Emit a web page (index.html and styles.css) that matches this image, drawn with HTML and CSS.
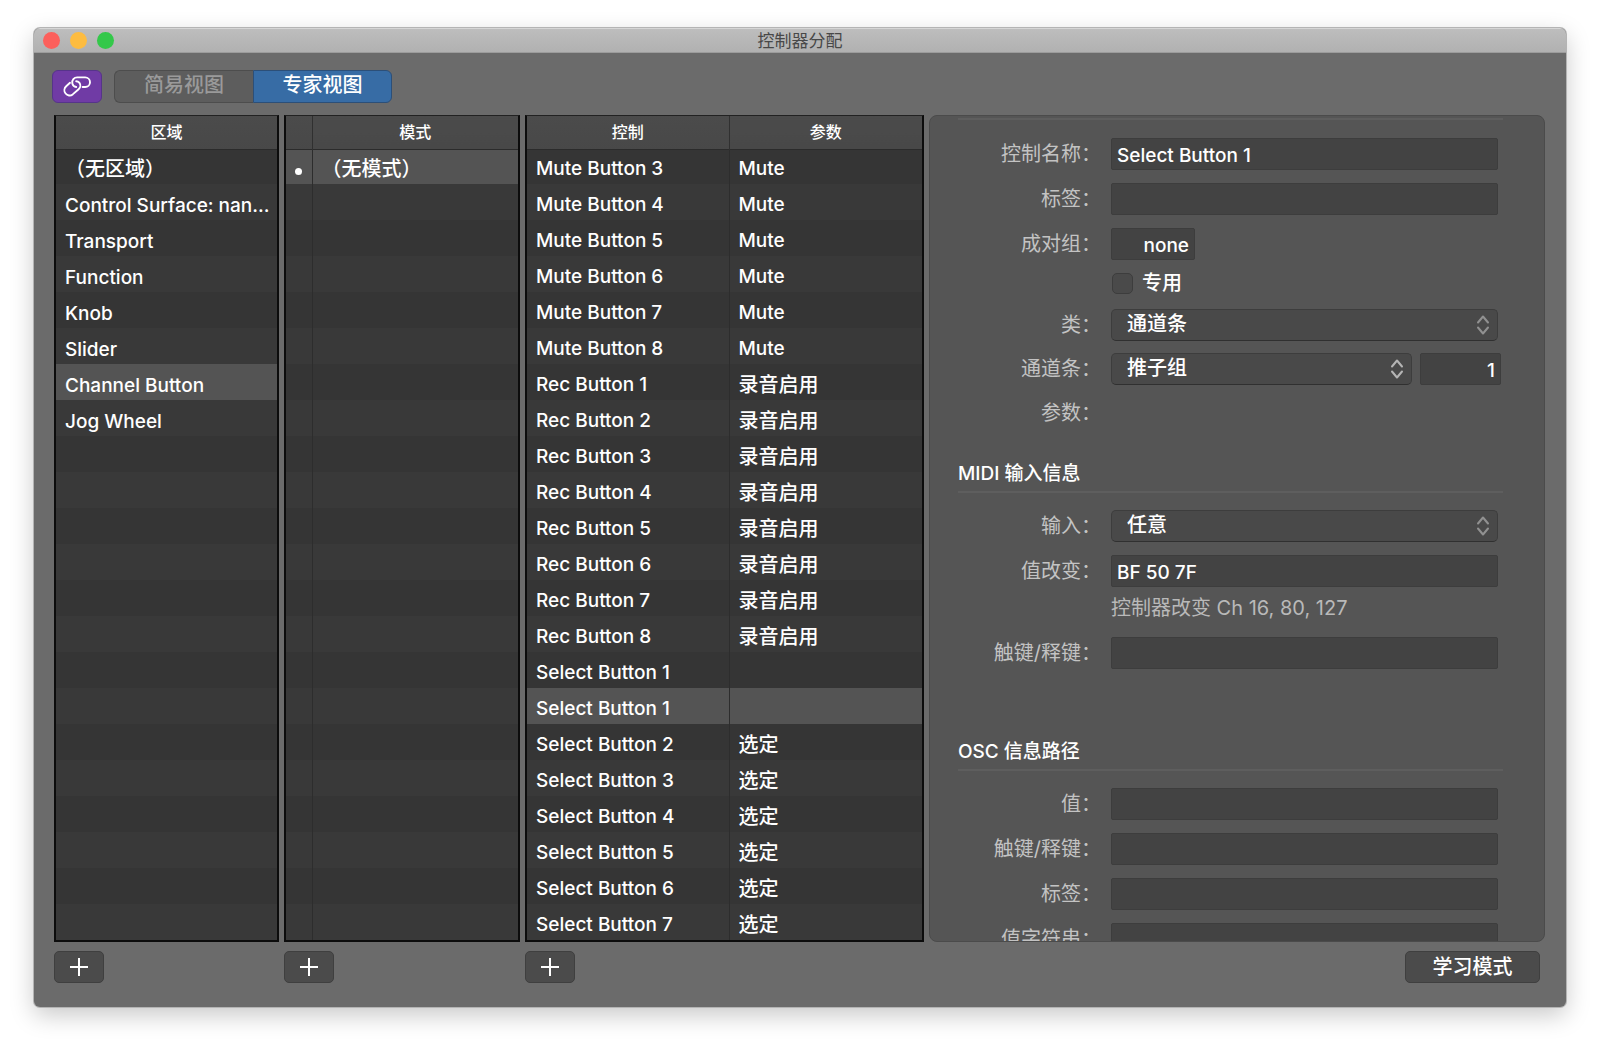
FILE: index.html
```html
<!DOCTYPE html>
<html lang="zh-CN">
<head>
<meta charset="utf-8">
<meta name="viewport" content="width=device-width, initial-scale=1">
<title>控制器分配</title>
<link rel="stylesheet" href="styles.css">
</head>
<body>
<div class="window">
  <header class="titlebar">
    <div class="lights"><span class="light close"></span><span class="light minimize"></span><span class="light zoom"></span></div>
    <h1 class="title">控制器分配</h1>
  </header>

  <div class="toolbar">
    <button class="link-button" type="button" aria-label="链接">
      <svg width="28" height="22" viewBox="0 0 28 22" fill="none" stroke="#fff" stroke-width="1.9" stroke-linecap="round" stroke-linejoin="round">
        <path d="M7 6.800 3.200 10.200A5.300 5.300 0 0 0 2.600 17.500C4.300 19.800 7.500 20.200 9.700 18.400L15.600 13.300A4.800 4.800 0 0 0 16.300 6.700C15.500 5.800 14.500 5.300 13.200 5.300"/>
        <path d="M19.600 11H22.200A4.800 4.800 0 0 0 22.200 1.400H14.300A5 5 0 0 0 9.300 7.400C9.700 9.400 11 10.700 13.200 11"/>
      </svg>
    </button>
    <div class="segmented">
      <button class="segment" type="button">简易视图</button>
      <button class="segment active" type="button">专家视图</button>
    </div>
  </div>

  <main class="panes">
    <div class="list zones">
      <table>
        <thead><tr><th>区域</th></tr></thead>
        <tbody>
          <tr><td class="cjk">（无区域）</td></tr>
          <tr><td>Control Surface: nan...</td></tr>
          <tr><td>Transport</td></tr>
          <tr><td>Function</td></tr>
          <tr><td>Knob</td></tr>
          <tr><td>Slider</td></tr>
          <tr class="selected"><td>Channel Button</td></tr>
          <tr><td>Jog Wheel</td></tr>
        </tbody>
      </table>
    </div>

    <div class="list modes">
      <table>
        <colgroup><col class="mark-col"><col></colgroup>
        <thead><tr><th></th><th>模式</th></tr></thead>
        <tbody>
          <tr class="selected"><td class="mark"><span class="dot"></span></td><td class="cjk">（无模式）</td></tr>
        </tbody>
      </table>
    </div>

    <div class="list controls">
      <table>
        <colgroup><col class="control-col"><col></colgroup>
        <thead><tr><th>控制</th><th>参数</th></tr></thead>
        <tbody>
          <tr><td>Mute Button 3</td><td>Mute</td></tr>
          <tr><td>Mute Button 4</td><td>Mute</td></tr>
          <tr><td>Mute Button 5</td><td>Mute</td></tr>
          <tr><td>Mute Button 6</td><td>Mute</td></tr>
          <tr><td>Mute Button 7</td><td>Mute</td></tr>
          <tr><td>Mute Button 8</td><td>Mute</td></tr>
          <tr><td>Rec Button 1</td><td class="cjk">录音启用</td></tr>
          <tr><td>Rec Button 2</td><td class="cjk">录音启用</td></tr>
          <tr><td>Rec Button 3</td><td class="cjk">录音启用</td></tr>
          <tr><td>Rec Button 4</td><td class="cjk">录音启用</td></tr>
          <tr><td>Rec Button 5</td><td class="cjk">录音启用</td></tr>
          <tr><td>Rec Button 6</td><td class="cjk">录音启用</td></tr>
          <tr><td>Rec Button 7</td><td class="cjk">录音启用</td></tr>
          <tr><td>Rec Button 8</td><td class="cjk">录音启用</td></tr>
          <tr><td>Select Button 1</td><td></td></tr>
          <tr class="selected"><td>Select Button 1</td><td></td></tr>
          <tr><td>Select Button 2</td><td class="cjk">选定</td></tr>
          <tr><td>Select Button 3</td><td class="cjk">选定</td></tr>
          <tr><td>Select Button 4</td><td class="cjk">选定</td></tr>
          <tr><td>Select Button 5</td><td class="cjk">选定</td></tr>
          <tr><td>Select Button 6</td><td class="cjk">选定</td></tr>
          <tr><td>Select Button 7</td><td class="cjk">选定</td></tr>
        </tbody>
      </table>
    </div>

    <form class="inspector">
      <section class="group">
        <div class="row"><label for="name">控制名称：</label><input class="field" id="name" type="text" value="Select Button 1"></div>
        <div class="row"><label for="tag">标签：</label><input class="field" id="tag" type="text"></div>
        <div class="row"><label for="pair">成对组：</label><input class="field pair" id="pair" type="text" value="none"></div>
        <div class="row check-row"><input class="check" id="exclusive" type="checkbox"><label class="check-label" for="exclusive">专用</label></div>
        <div class="row tight">
          <label for="class">类：</label>
          <span class="popup"><select id="class"><option>通道条</option></select><svg class="chevrons" width="14" height="22" viewBox="0 0 14 22"><path d="M2 8.500 7 2.500 12 8.500M2 13.500 7 19.500 12 13.500"/></svg></span>
        </div>
        <div class="row tight wide">
          <label for="strip">通道条：</label>
          <span class="popup"><select id="strip"><option>推子组</option></select><svg class="chevrons bright" width="14" height="22" viewBox="0 0 14 22"><path d="M2 8.500 7 2.500 12 8.500M2 13.500 7 19.500 12 13.500"/></svg></span>
          <input class="field number" type="text" value="1" aria-label="通道条编号">
        </div>
        <div class="row tight"><span class="label">参数：</span></div>
      </section>

      <section class="group">
        <h2>MIDI 输入信息</h2>
        <div class="row">
          <label for="input">输入：</label>
          <span class="popup"><select id="input"><option>任意</option></select><svg class="chevrons" width="14" height="22" viewBox="0 0 14 22"><path d="M2 8.500 7 2.500 12 8.500M2 13.500 7 19.500 12 13.500"/></svg></span>
        </div>
        <div class="row"><label for="change">值改变：</label><input class="field" id="change" type="text" value="BF 50 7F"></div>
        <p class="hint">控制器改变 Ch 16, 80, 127</p>
        <div class="row"><label for="touch">触键/释键：</label><input class="field" id="touch" type="text"></div>
      </section>

      <section class="group osc">
        <h2>OSC 信息路径</h2>
        <div class="row"><label for="osc-value">值：</label><input class="field" id="osc-value" type="text"></div>
        <div class="row"><label for="osc-touch">触键/释键：</label><input class="field" id="osc-touch" type="text"></div>
        <div class="row"><label for="osc-tag">标签：</label><input class="field" id="osc-tag" type="text"></div>
        <div class="row"><label for="osc-string">值字符串：</label><input class="field" id="osc-string" type="text"></div>
      </section>
    </form>
  </main>

  <footer class="actions">
    <button class="push add" type="button" aria-label="添加区域"><svg width="20" height="20" viewBox="0 0 20 20"><path d="M10 1V19M1 10H19"/></svg></button>
    <button class="push add" type="button" aria-label="添加模式"><svg width="20" height="20" viewBox="0 0 20 20"><path d="M10 1V19M1 10H19"/></svg></button>
    <button class="push add" type="button" aria-label="添加控制"><svg width="20" height="20" viewBox="0 0 20 20"><path d="M10 1V19M1 10H19"/></svg></button>
    <button class="push learn" type="button">学习模式</button>
  </footer>
</div>
</body>
</html>
```
FILE: styles.css
```css
:root {
  --columns: minmax(0, 225fr) minmax(0, 236fr) minmax(0, 399fr) minmax(0, 616fr);
  --row: 36px;
}

* { box-sizing: border-box; }

body {
  margin: 0;
  padding: 28px 34px 41px;
  background: #fff;
  color: #fff;
  font: 500 19px/24px Inter, "Noto Sans CJK SC", sans-serif;
}

button, input, select { font: inherit; color: inherit; margin: 0; }

.window {
  display: flex;
  flex-direction: column;
  height: calc(100vh - 69px);
  border-radius: 6px;
  background: #6b6b6b;
  box-shadow: 0 0 0 1px #b4b4b4, 0 8px 24px rgba(0, 0, 0, 0.22);
  overflow: hidden;
}

.titlebar {
  display: grid;
  grid-template-columns: 1fr auto 1fr;
  align-items: center;
  height: 25px;
  padding: 0 9px;
  background: linear-gradient(#bdbdbd, #b1b1b1);
  border-top: 1px solid #d6d6d6;
  border-bottom: 1px solid #9c9c9c;
}

.lights { display: flex; gap: 10px; }
.light { width: 17px; height: 17px; border-radius: 50%; }
.close { background: #fc605c; }
.minimize { background: #fdbc40; }
.zoom { background: #34c84a; }

.title {
  margin: 0;
  color: #484848;
  font-size: 17px;
  font-weight: 400;
  line-height: 22px;
}

.toolbar { display: flex; gap: 12px; padding: 17px 18px 12px; }

.link-button {
  display: grid;
  place-items: center;
  width: 50px;
  height: 33px;
  padding: 0;
  border: 1px solid #56348a;
  border-radius: 6px;
  background: #703ba5;
}

.segmented { display: flex; height: 33px; }

.segment {
  width: 139px;
  padding: 0 0 3px;
  border: 1px solid #4d4d4d;
  background: #5d5d5d;
  color: #9a9a9a;
  font-size: 20px;
  line-height: 26px;
}
.segment:first-child { border-right: 0; border-radius: 6px 0 0 6px; }
.segment.active { border-color: #2c4f78; border-radius: 0 6px 6px 0; background: #376ca5; color: #fff; }

.panes {
  display: grid;
  grid-template-columns: var(--columns);
  grid-template-rows: minmax(0, 1fr);
  gap: 5px;
  flex: 1;
  min-height: 0;
  padding: 0 21px 0 20px;
}

.list {
  border: 2px solid #0c0c0c;
  border-top: 1px solid #222;
  background: repeating-linear-gradient(#353535 0 var(--row), #393939 var(--row) 72px) 0 32px;
  overflow: hidden;
}

.list table { width: 100%; border-collapse: collapse; table-layout: fixed; }
.mark-col { width: 26px; }
.control-col { width: 202px; }

.list th {
  height: 34px;
  padding: 0 0 2px;
  background: linear-gradient(#4b4b4b, #484848);
  font-size: 16px;
  font-weight: 500;
  box-shadow: inset 0 -1px #2b2b2b;
}
.list th + th { border-left: 1px solid #303030; }

.list td {
  height: var(--row);
  padding: 6px 8px 0 9px;
  line-height: 24px;
  white-space: nowrap;
  overflow: hidden;
}
.list tr:first-child td { height: 34px; padding-top: 4px; }
.list td + td { border-left: 1px solid #2d2d2d; }
.zones td { padding-top: 8px; }
.list .cjk { font-size: 20px; }
.list .mark { padding: 2px 0 0; }
.list .selected { background: #545454; }

.modes { background: linear-gradient(#2d2d2d, #2d2d2d) 26px 0 / 1px 100% no-repeat, repeating-linear-gradient(#353535 0 var(--row), #393939 var(--row) 72px) 0 32px; }

.dot { display: block; width: 7px; height: 7px; margin: 4px auto 0; border-radius: 50%; background: #fff; }

.inspector {
  padding: 2px 41px 0 28px;
  border: 1px solid #4b4b4b;
  border-radius: 8px;
  background: #555;
  overflow: hidden;
}

.group { border-top: 2px solid #5e5e5e; padding-top: 18px; }
.group + .group { border-top: 0; padding-top: 19px; }
.group.osc { padding-top: 56px; }

h2 {
  margin: 0 0 17px;
  padding-bottom: 3px;
  border-bottom: 2px solid #5e5e5e;
  font-size: 19px;
  font-weight: 500;
  line-height: 28px;
}

.row { display: flex; align-items: center; height: 32px; margin: 0 5px 13px 0; }
.row.tight { margin-bottom: 12px; }
.row.wide { margin-right: 2px; }
.row > label:first-child, .label {
  flex: none;
  width: 143px;
  margin-right: 10px;
  color: #c3c3c3;
  font-weight: 400;
  font-size: 20px;
  text-align: right;
}

.field {
  flex: 1;
  min-width: 0;
  height: 32px;
  padding: 2px 5px 0;
  border: 1px solid #3d3d3d;
  border-radius: 2px;
  background: #434343;
  outline: 0;
}
.pair { flex: none; width: 84px; text-align: right; }
.number { flex: none; width: 81px; margin-left: 8px; text-align: right; }

.row.check-row { height: 22px; margin: -1px 0 15px 154px; }
.check {
  appearance: none;
  width: 21px;
  height: 21px;
  border: 1px solid #3d3d3d;
  border-radius: 5px;
  background: #4a4a4a;
}
.row .check-label { margin-left: 9px; font-size: 20px; }

.popup { display: flex; flex: 1; position: relative; min-width: 0; }
.popup select {
  appearance: none;
  flex: 1;
  min-width: 0;
  height: 32px;
  padding: 0 30px 2px 15px;
  border: 1px solid #3d3d3d;
  border-bottom-color: #303030;
  border-radius: 5px;
  background: #494949;
  font-size: 20px;
}
.chevrons { position: absolute; top: 5px; right: 8px; fill: none; stroke: #919191; stroke-width: 2; stroke-linecap: round; stroke-linejoin: round; pointer-events: none; }
.chevrons.bright { stroke: #b4b4b4; }

.hint { margin: -4px 0 17px 153px; color: #b9b9b9; font-size: 20px; font-weight: 400; }

.actions {
  display: grid;
  grid-template-columns: var(--columns);
  gap: 5px;
  padding: 9px 21px 24px 20px;
}

.push {
  display: grid;
  place-items: center;
  height: 32px;
  padding: 0;
  border: 1px solid #3f3f3f;
  border-radius: 5px;
  background: #4b4b4b;
  font-size: 20px;
}
.add { width: 50px; }
.add svg { fill: none; stroke: #fff; stroke-width: 2; }
.learn { width: 135px; margin-right: 5px; justify-self: end; }
```
